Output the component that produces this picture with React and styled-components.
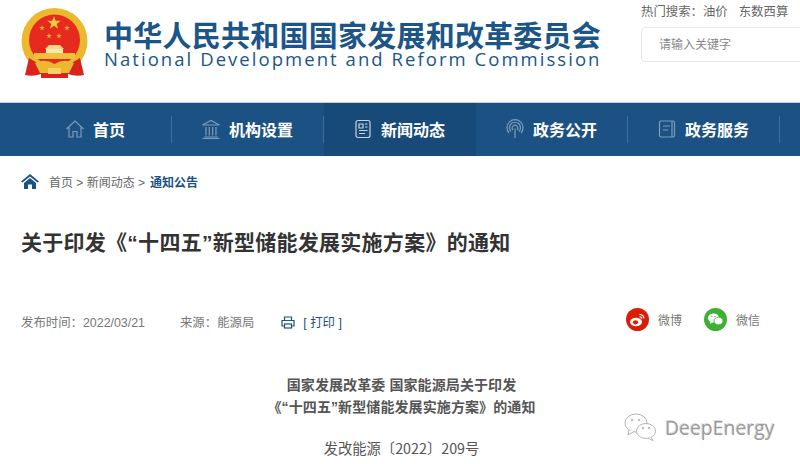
import React from "react";
import styled, { createGlobalStyle } from "styled-components";

const GlobalStyle = createGlobalStyle`
  html, body { margin: 0; padding: 0; background: #fff; }
  body {
    width: 800px;
    height: 464px;
    overflow: hidden;
    font-family: "Liberation Sans", "Noto Sans CJK SC", sans-serif;
  }
`;

const Page = styled.div`
  position: relative;
  width: 800px;
  height: 464px;
  overflow: hidden;
`;

const Header = styled.header`
  display: flex;
  justify-content: space-between;
  height: 102px;
  padding-left: 21px;
  box-sizing: border-box;
`;

const Brand = styled.div`
  display: flex;
  align-items: flex-start;
  gap: 15px;
  padding-top: 8px;
`;

const BrandText = styled.div`
  display: flex;
  flex-direction: column;
  padding-top: 11px;
  color: #1c5587;
`;

const BrandCn = styled.div`
  font-family: "Noto Sans CJK SC", sans-serif;
  font-size: 29px;
  font-weight: 700;
  line-height: 30px;
  height: 29px;
  letter-spacing: 0.24px;
  white-space: nowrap;
`;

const BrandEn = styled.div`
  font-family: "Open Sans", sans-serif;
  font-size: 18.5px;
  line-height: 22px;
  letter-spacing: 2.05px;
  white-space: nowrap;
`;

const SearchArea = styled.div`
  width: 159px;
  padding-top: 3px;
`;

const HotLine = styled.div`
  display: flex;
  gap: 11px;
  font-size: 12.4px;
  line-height: 18px;
  color: #666;
  white-space: nowrap;
`;

const SearchBox = styled.div`
  margin-top: 6px;
  height: 35px;
  width: 175px;
  box-sizing: border-box;
  border: 1px solid #e6e6e6;
  border-radius: 4px;
  padding: 0 0 2px 17px;
  display: flex;
  align-items: center;
  font-size: 12px;
  color: #888;
`;

const Nav = styled.nav`
  display: flex;
  height: 54px;
  padding-left: 20px;
  background: #1c5283;
  border-top: 1px solid #c4d0dc;
  box-sizing: border-box;
`;

const NavItem = styled.div`
  position: relative;
  width: 152px;
  box-sizing: border-box;
  padding: 0 2px 2px 0;
  display: flex;
  align-items: center;
  justify-content: center;
  gap: 8px;
  color: #fff;
  font-size: 16px;
  font-weight: 700;
  background: ${(p) => (p.$active ? "#174a79" : "transparent")};
  white-space: nowrap;

  &::after {
    content: "";
    position: absolute;
    right: 0;
    top: 13px;
    height: 27px;
    width: 1px;
    background: ${(p) => (p.$active ? "transparent" : "#3f6e9a")};
  }
`;

const NavIcon = styled.svg`
  width: 20px;
  height: 20px;
  fill: none;
  stroke: ${(p) => (p.$active ? "#c5d3e0" : "#7d9cb9")};
  stroke-width: 1.2;
  flex: none;
`;

const Main = styled.main`
  padding: 0 21px;
`;

const Crumbs = styled.div`
  display: flex;
  align-items: center;
  gap: 5px;
  height: 50px;
  font-size: 12px;
  color: #666;
`;

const CrumbCurrent = styled.span`
  color: #1c5283;
  font-weight: 700;
`;

const Title = styled.h1`
  margin: 15px 0 0;
  font-family: "Liberation Sans", "Noto Sans CJK SC", sans-serif;
  font-size: 21px;
  line-height: 44px;
  font-weight: 700;
  letter-spacing: 0.27px;
  color: #333;
  white-space: nowrap;
`;

const Meta = styled.div`
  display: flex;
  align-items: center;
  margin-top: 43px;
  height: 28px;
  font-size: 12.4px;
  color: #777;
`;

const MetaText = styled.span`
  margin-right: ${(p) => p.$gap}px;
`;

const PrintLink = styled.span`
  display: flex;
  align-items: center;
  gap: 8px;
  color: #1c5283;
`;

const Share = styled.div`
  display: flex;
  align-items: center;
  margin: 0 19px 6px auto;
  gap: 22px;
`;

const ShareItem = styled.div`
  display: flex;
  align-items: center;
  gap: 9px;
  font-size: 12px;
`;

const Article = styled.article`
  margin-top: 38px;
  padding-left: 3px;
  text-align: center;
  font-family: "Liberation Sans", "Noto Sans CJK SC", sans-serif;
  font-size: 14px;
  color: #555;
`;

const Heading = styled.div`
  font-size: 14px;
  font-weight: 700;
  line-height: 22px;
  letter-spacing: 0.1px;
`;

const DocNo = styled.div`
  margin-top: 19px;
  font-size: 14.3px;
  line-height: 22px;
  font-family: "Noto Sans CJK SC", sans-serif;
`;

const Watermark = styled.div`
  position: absolute;
  left: 624px;
  top: 413px;
  display: flex;
  align-items: center;
  gap: 7px;
  font-family: "Open Sans", sans-serif;
  font-size: 19.4px;
  color: #9a9a9a;
  text-shadow: 1px 1px 0 #fff, -1px -1px 0 #ddd;
`;

const star = (cx, cy, r) => {
  const pts = [];
  for (let i = 0; i < 10; i++) {
    const a = -Math.PI / 2 + (i * Math.PI) / 5;
    const d = i % 2 ? r * 0.4 : r;
    pts.push(`${(cx + d * Math.cos(a)).toFixed(1)},${(cy + d * Math.sin(a)).toFixed(1)}`);
  }
  return pts.join(" ");
};

const Emblem = () => (
  <svg width="68" height="72" viewBox="0 0 68 72">
    <circle cx="33.5" cy="33" r="33" fill="#eab92f" />
    <circle cx="33.5" cy="32" r="25.5" fill="#e8291f" />
    <polygon points={star(33, 15, 7)} fill="#f3c93a" />
    <polygon points={star(21, 20, 3)} fill="#dfa92e" />
    <polygon points={star(46, 20, 3)} fill="#dfa92e" />
    <polygon points={star(28, 28, 3)} fill="#dfa92e" />
    <polygon points={star(38, 28, 3)} fill="#dfa92e" />
    <path d="M24 41 L28 37 L39 37 L43 41 Z" fill="#f2d98a" />
    <rect x="25" y="41" width="17" height="4" fill="#f6e6b0" />
    <rect x="13" y="45" width="41" height="6" fill="#efc23d" />
    <path d="M8 50 L4 67 Q12 69 20 66 L18 56 Z" fill="#d8241c" />
    <path d="M59 50 L63 67 Q55 69 47 66 L49 56 Z" fill="#d8241c" />
    <path d="M14 55 Q24 50 33.5 56 Q43 50 53 55 L48 65 L19 65 Z" fill="#eab92f" />
    <path d="M20 65 H47 V70 H20 Z" fill="#d8241c" />
    <path d="M27 60 H40 V66 H27 Z" fill="#f3d263" />
  </svg>
);

const HomeIcon = () => (
  <NavIcon viewBox="0 0 20 20">
    <path d="M1.5 10 L10 2 L18.5 10 M4 8.5 V18 H8 V12.5 H12 V18 H16 V8.5" />
  </NavIcon>
);

const BankIcon = () => (
  <NavIcon viewBox="0 0 20 20">
    <path d="M1.5 6 L10 1.5 L18.5 6 Z M3 18 H17 M1.5 19.5 H18.5 M5 8 V16.5 M8.3 8 V16.5 M11.7 8 V16.5 M15 8 V16.5" />
  </NavIcon>
);

const NewsIcon = () => (
  <NavIcon $active viewBox="0 0 20 20">
    <rect x="3" y="1.5" width="14" height="17" rx="2" />
    <path d="M6 5 H10 V9 H6 Z M12 5 H14.5 M12 8 H14.5 M6 11.5 H14.5 M6 14.5 H12" />
  </NavIcon>
);

const SignalIcon = () => (
  <NavIcon viewBox="0 0 20 20">
    <path d="M10 9.5 V19 M4 14 A8 8 0 1 1 16 14 M6 12.5 A5.5 5.5 0 1 1 14 12.5 M8 11 A2.8 2.8 0 1 1 12 11" />
  </NavIcon>
);

const BookIcon = () => (
  <NavIcon viewBox="0 0 20 20">
    <path d="M16 2 H4 A1.5 1.5 0 0 0 2.5 3.5 V16.5 A1.5 1.5 0 0 0 4 18 H16 A1.5 1.5 0 0 0 17.5 16.5 V3.5 A1.5 1.5 0 0 0 16 2 Z M6 7 H13 M6 11 H11 M15 2 V18" />
  </NavIcon>
);

const Crumb = () => (
  <svg width="18" height="16" viewBox="0 0 18 16" style={{ marginRight: 5 }}>
    <path d="M9 1 L18 8.5 L16.5 9.5 L9 3.5 L1.5 9.5 L0 8.5 Z M3 10 L9 5 L15 10 V16 H11 V11.5 H7 V16 H3 Z" fill="#1c5283" />
  </svg>
);

const PrintIcon = () => (
  <svg width="14" height="13" viewBox="0 0 14 13" fill="none" stroke="#1c5283" strokeWidth="1.2">
    <path d="M3.5 4 V1 H10.5 V4 M3 10 H1 V4.5 H13 V10 H11" />
    <rect x="3.5" y="8" width="7" height="4" />
  </svg>
);

const WeiboIcon = () => (
  <svg width="23" height="23" viewBox="0 0 23 23">
    <circle cx="11.5" cy="11.5" r="11.5" fill="#d81e06" />
    <ellipse cx="10" cy="14" rx="6" ry="4.2" fill="#fff" />
    <ellipse cx="9.5" cy="14.3" rx="2.6" ry="2.1" fill="#d81e06" />
    <path d="M13.5 6.5 A4 4 0 0 1 18 10.5 M13.5 8.8 A2 2 0 0 1 15.8 10.8" fill="none" stroke="#fff" strokeWidth="1.1" />
  </svg>
);

const WechatIcon = () => (
  <svg width="23" height="23" viewBox="0 0 23 23">
    <circle cx="11.5" cy="11.5" r="11.5" fill="#3eb135" />
    <ellipse cx="9.5" cy="10" rx="5.5" ry="4.6" fill="#fff" />
    <path d="M6.5 13 L6 16 L9 14 Z" fill="#fff" />
    <ellipse cx="14.5" cy="13" rx="4.5" ry="3.8" fill="#fff" stroke="#3eb135" strokeWidth="0.8" />
    <circle cx="7.8" cy="8.6" r="0.7" fill="#3eb135" />
    <circle cx="11" cy="8.6" r="0.7" fill="#3eb135" />
  </svg>
);

const WatermarkIcon = () => (
  <svg width="34" height="28" viewBox="0 0 34 28" fill="#fff" stroke="#b5b5b5" strokeWidth="1">
    <ellipse cx="12" cy="10" rx="11" ry="9" />
    <path d="M5 17 L4 22 L10 18.5" />
    <ellipse cx="22" cy="18" rx="9.5" ry="7.5" />
    <path d="M27 24 L29 27.5 L24 25.2" />
    <circle cx="8" cy="7" r="0.8" fill="#aaa" />
    <circle cx="15" cy="7" r="0.8" fill="#aaa" />
    <circle cx="19" cy="15" r="0.8" fill="#aaa" />
    <circle cx="25" cy="15" r="0.8" fill="#aaa" />
  </svg>
);

const navItems = [
  { label: "首页", icon: <HomeIcon /> },
  { label: "机构设置", icon: <BankIcon /> },
  { label: "新闻动态", icon: <NewsIcon />, active: true },
  { label: "政务公开", icon: <SignalIcon /> },
  { label: "政务服务", icon: <BookIcon /> },
];

const App = () => (
  <Page>
    <GlobalStyle />
    <Header>
      <Brand>
        <Emblem />
        <BrandText>
          <BrandCn>中华人民共和国国家发展和改革委员会</BrandCn>
          <BrandEn>National Development and Reform Commission</BrandEn>
        </BrandText>
      </Brand>
      <SearchArea>
        <HotLine>
          <span>热门搜索：油价</span>
          <span>东数西算</span>
        </HotLine>
        <SearchBox>请输入关键字</SearchBox>
      </SearchArea>
    </Header>
    <Nav>
      {navItems.map((item) => (
        <NavItem key={item.label} $active={item.active}>
          {item.icon}
          {item.label}
        </NavItem>
      ))}
    </Nav>
    <Main>
      <Crumbs>
        <Crumb />
        首页 &gt; 新闻动态 &gt; <CrumbCurrent>通知公告</CrumbCurrent>
      </Crumbs>
      <Title>关于印发《“十四五”新型储能发展实施方案》的通知</Title>
      <Meta>
        <MetaText $gap={35}>发布时间：2022/03/21</MetaText>
        <MetaText $gap={27}>来源：能源局</MetaText>
        <PrintLink>
          <PrintIcon />[ 打印 ]
        </PrintLink>
        <Share>
          <ShareItem>
            <WeiboIcon />
            微博
          </ShareItem>
          <ShareItem>
            <WechatIcon />
            微信
          </ShareItem>
        </Share>
      </Meta>
      <Article>
        <Heading>国家发展改革委 国家能源局关于印发</Heading>
        <Heading>《“十四五”新型储能发展实施方案》的通知</Heading>
        <DocNo>发改能源〔2022〕209号</DocNo>
      </Article>
    </Main>
    <Watermark>
      <WatermarkIcon />
      DeepEnergy
    </Watermark>
  </Page>
);

export default App;
